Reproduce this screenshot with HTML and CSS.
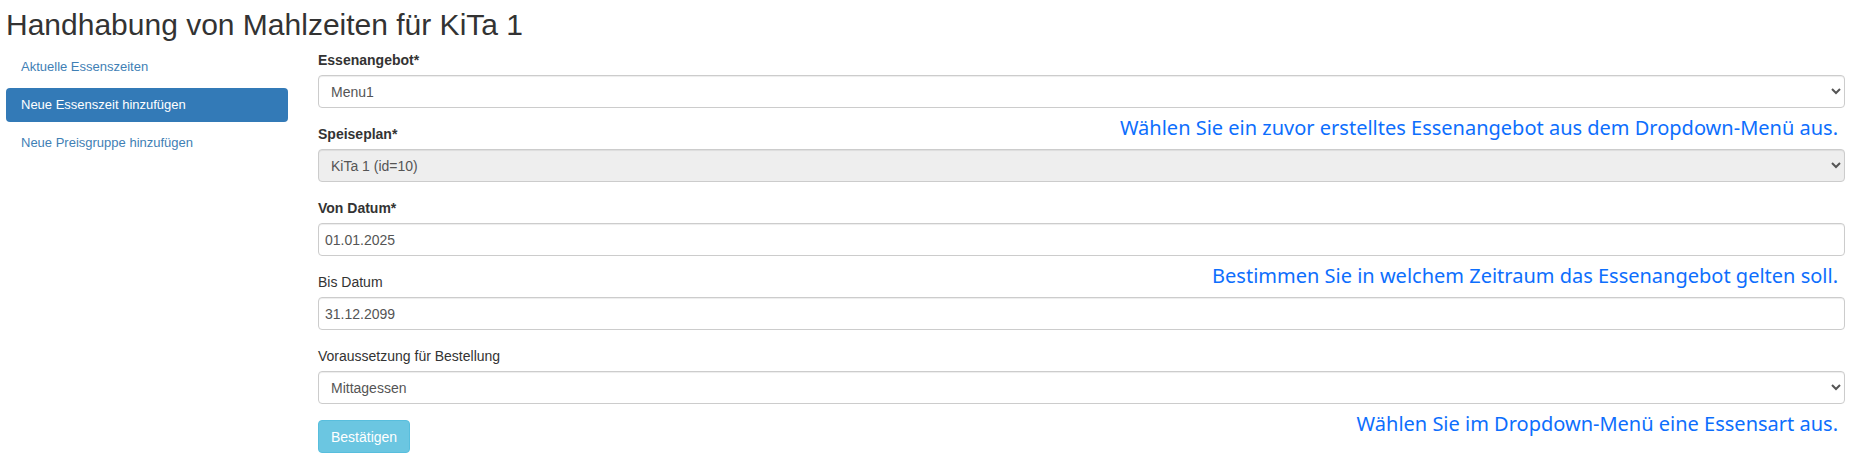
FILE: index.html
```html
<!DOCTYPE html>
<html lang="de">
<head>
    <meta charset="UTF-8">
    <meta name="viewport" content="width=device-width, initial-scale=1.0">
    <title>Handhabung von Mahlzeiten</title>
    <link rel="stylesheet" href="styles.css">
</head>
<body>
    <h1 class="page-title">Handhabung von Mahlzeiten für KiTa 1</h1>
    <div class="page-row">
        <ul class="nav-pills">
            <li><a href="#">Aktuelle Essenszeiten</a></li>
            <li class="active"><a href="#">Neue Essenszeit hinzufügen</a></li>
            <li><a href="#">Neue Preisgruppe hinzufügen</a></li>
        </ul>
        <form class="meal-form">
            <div class="form-group">
                <label class="required">Essenangebot*</label>
                <select class="form-control">
                    <option>Menu1</option>
                </select>
                <span class="hint">Wählen Sie ein zuvor erstelltes Essenangebot aus dem Dropdown-Menü aus.</span>
            </div>
            <div class="form-group">
                <label class="required">Speiseplan*</label>
                <select class="form-control" disabled>
                    <option>KiTa 1 (id=10)</option>
                </select>
            </div>
            <div class="form-group">
                <label class="required">Von Datum*</label>
                <input class="form-control date-input" type="text" value="01.01.2025">
                <span class="hint">Bestimmen Sie in welchem Zeitraum das Essenangebot gelten soll.</span>
            </div>
            <div class="form-group">
                <label>Bis Datum</label>
                <input class="form-control date-input" type="text" value="31.12.2099">
            </div>
            <div class="form-group">
                <label>Voraussetzung für Bestellung</label>
                <select class="form-control">
                    <option>Mittagessen</option>
                </select>
                <span class="hint">Wählen Sie im Dropdown-Menü eine Essensart aus.</span>
            </div>
            <button type="button" class="btn-info">Bestätigen</button>
        </form>
    </div>
</body>
</html>
```

FILE: styles.css
```css
body {
    margin: 0;
    background-color: #ffffff;
    color: #333333;
    font-family: "Liberation Sans", Arial, sans-serif;
    font-size: 14px;
}
.page-title {
    font-size: 30px;
    font-weight: normal;
    line-height: 1.1;
    margin: 8px 0 9px 6px;
    color: #333333;
}
.page-row {
    display: flex;
    align-items: flex-start;
}
.nav-pills {
    list-style: none;
    margin: 0 0 0 6px;
    padding: 0;
    width: 282px;
    display: flex;
    flex-direction: column;
    gap: 4px;
}
.nav-pills a {
    display: block;
    padding: 8px 15px;
    font-size: 13px;
    line-height: 18px;
    color: #3f80b5;
    text-decoration: none;
    border-radius: 4px;
}
.nav-pills .active a {
    background-color: #337ab7;
    color: #ffffff;
}
.meal-form {
    flex: 1;
    margin: 0 12px 0 30px;
}
.form-group {
    position: relative;
    margin-bottom: 16px;
}
.form-group label {
    display: block;
    line-height: 20px;
    margin-bottom: 5px;
    color: #333333;
}
.form-group label.required {
    font-weight: bold;
}
.form-control {
    display: block;
    box-sizing: border-box;
    width: 100%;
    height: 33px;
    padding: 6px 8px;
    font-family: "Liberation Sans", Arial, sans-serif;
    font-size: 14px;
    color: #555555;
    background-color: #ffffff;
    border: 1px solid #cccccc;
    border-radius: 4px;
    box-shadow: inset 0 1px 1px rgba(0, 0, 0, 0.075);
}
.date-input {
    padding: 6px 6px;
}
select.form-control:disabled {
    background-color: #eeeeee;
    color: #555555;
    opacity: 1;
}
.hint {
    position: absolute;
    right: 7px;
    top: calc(100% + 7px);
    font-family: "Noto Sans", "Open Sans", sans-serif;
    font-size: 20px;
    line-height: 26px;
    color: #0d6efd;
    white-space: nowrap;
}
.btn-info {
    display: block;
    height: 33px;
    padding: 6px 12px;
    margin-top: 1px;
    font-family: "Liberation Sans", Arial, sans-serif;
    font-size: 14px;
    color: #ffffff;
    background-color: #5bc0de;
    border: 1px solid #46b8da;
    border-radius: 4px;
    opacity: 0.9;
}
```
